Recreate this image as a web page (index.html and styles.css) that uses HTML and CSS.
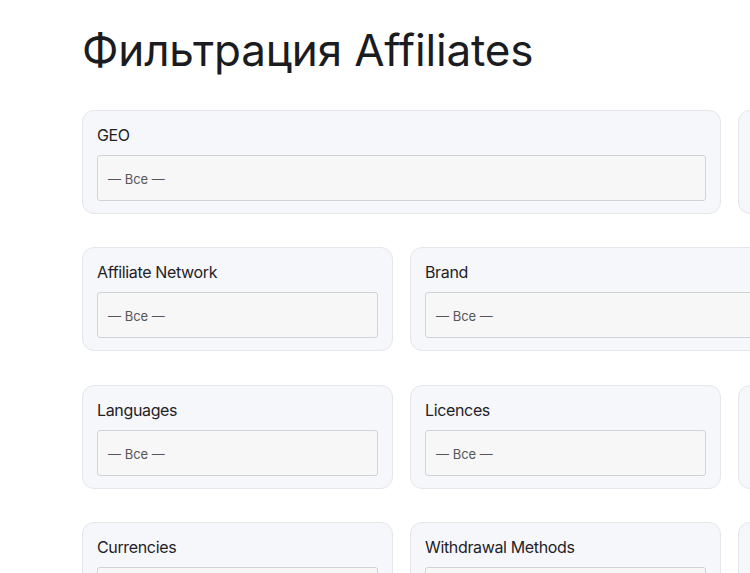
FILE: index.html
```html
<!DOCTYPE html>
<html lang="ru">
<head>
<meta charset="utf-8">
<title>Фильтрация Affiliates</title>
<link rel="stylesheet" href="styles.css">
</head>
<body>
<main class="page">
  <h1 class="title">Фильтрация Affiliates</h1>
  <div class="filters">
    <div class="card span-2">
      <label class="label">GEO</label>
      <div class="select">— Все —</div>
    </div>
    <div class="card">
      <label class="label">Type</label>
      <div class="select">— Все —</div>
    </div>

    <div class="card">
      <label class="label">Affiliate Network</label>
      <div class="select">— Все —</div>
    </div>
    <div class="card span-2">
      <label class="label">Brand</label>
      <div class="select">— Все —</div>
    </div>

    <div class="card">
      <label class="label">Languages</label>
      <div class="select">— Все —</div>
    </div>
    <div class="card">
      <label class="label">Licences</label>
      <div class="select">— Все —</div>
    </div>
    <div class="card">
      <label class="label">Platforms</label>
      <div class="select">— Все —</div>
    </div>

    <div class="card">
      <label class="label">Currencies</label>
      <div class="select">— Все —</div>
    </div>
    <div class="card">
      <label class="label">Withdrawal Methods</label>
      <div class="select">— Все —</div>
    </div>
    <div class="card">
      <label class="label">Deposit Methods</label>
      <div class="select">— Все —</div>
    </div>
  </div>
</main>
</body>
</html>
```
FILE: styles.css
```css
html, body {
  margin: 0;
  padding: 0;
  overflow: hidden;
  background: #ffffff;
}

body {
  font-family: Inter, "Noto Sans", "Liberation Sans", sans-serif;
  color: #1d1f23;
}

.page {
  padding: 23px 0 0 82px;
}

.title {
  margin: 0 0 32px 0;
  font-size: 44px;
  font-weight: 400;
  line-height: 55px;
  color: #1b1c1f;
  letter-spacing: -0.15px;
  white-space: nowrap;
}

.filters {
  display: grid;
  grid-template-columns: repeat(3, 311px);
  column-gap: 17px;
  row-gap: 33.33px;
  width: max-content;
}

.span-2 {
  grid-column: span 2;
}

.card {
  box-sizing: border-box;
  height: 104px;
  padding: 14px 14px 0 14px;
  border: 1px solid #e4e6eb;
  border-radius: 12px;
  background: #f6f7fb;
  display: flex;
  flex-direction: column;
}

.label {
  display: block;
  font-size: 16px;
  line-height: 20px;
  margin: 0 0 10px 0;
  color: #1f2226;
  letter-spacing: -0.35px;
  white-space: nowrap;
}

.select {
  box-sizing: border-box;
  height: 46px;
  padding: 2px 10px 0 10px;
  border: 1px solid #d2d3d6;
  border-radius: 3px;
  background: #f7f7f7;
  font-size: 13px;
  line-height: 42px;
  color: #555659;
}
```
